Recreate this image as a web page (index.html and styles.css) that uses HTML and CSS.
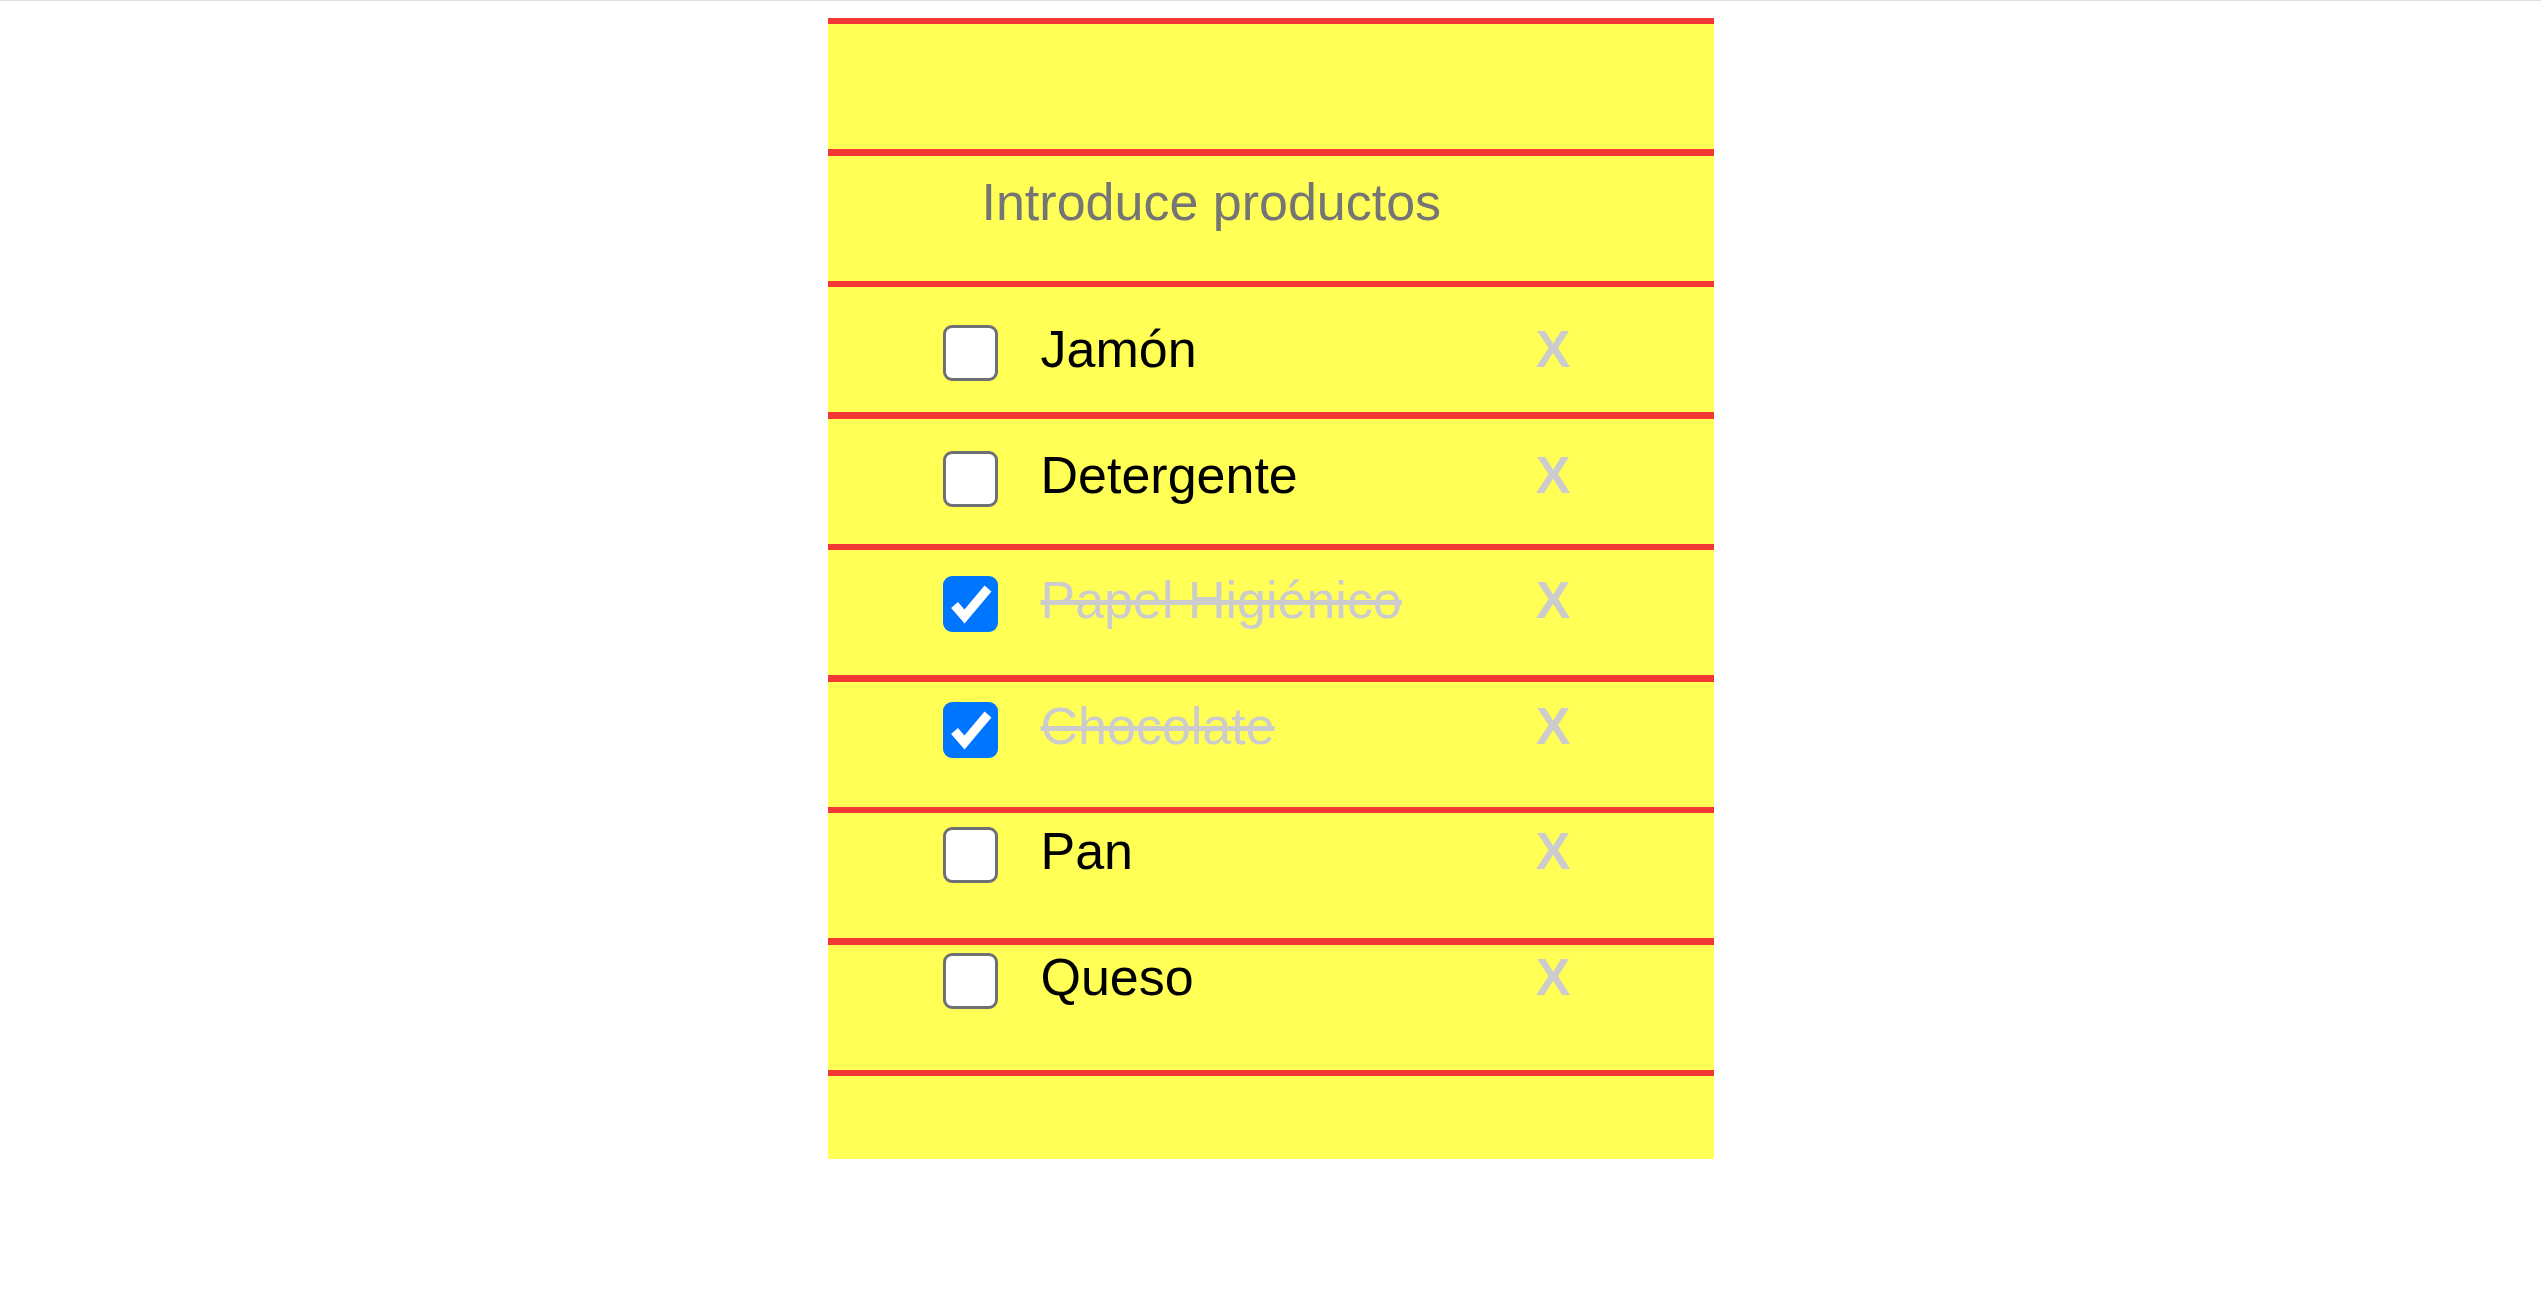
FILE: index.html
```html
<!DOCTYPE html>
<html lang="es">
<head>
    <meta charset="UTF-8">
    <meta name="viewport" content="width=device-width, initial-scale=1.0">
    <title>Lista de la compra</title>
    <link rel="stylesheet" href="styles.css">
</head>
<body>

    <main class="hoja">
        <form class="nuevo">
            <input type="text" class="entrada" placeholder="Introduce productos">
        </form>

        <ul class="productos">
            <li class="producto">
                <input type="checkbox" class="marca">
                <span class="nombre">Jamón</span>
                <button class="borrar">X</button>
            </li>
            <li class="producto">
                <input type="checkbox" class="marca">
                <span class="nombre">Detergente</span>
                <button class="borrar">X</button>
            </li>
            <li class="producto hecho">
                <input type="checkbox" class="marca" checked>
                <span class="nombre">Papel Higiénico</span>
                <button class="borrar">X</button>
            </li>
            <li class="producto hecho">
                <input type="checkbox" class="marca" checked>
                <span class="nombre">Chocolate</span>
                <button class="borrar">X</button>
            </li>
            <li class="producto">
                <input type="checkbox" class="marca">
                <span class="nombre">Pan</span>
                <button class="borrar">X</button>
            </li>
            <li class="producto">
                <input type="checkbox" class="marca">
                <span class="nombre">Queso</span>
                <button class="borrar">X</button>
            </li>
        </ul>
    </main>

</body>
</html>
```

FILE: styles.css
```css
body {
    margin: 0;
    border-top: 1px solid #dfdfe6;
    background-color: #fff;
    font-family: "Liberation Sans", Arial, sans-serif;
}
.hoja {
    width: 886px;
    margin: 17px auto 0;
    padding: 155px 0 86.4px;
    /* hoja de bloc: amarillo con rayas rojas */
    background-color: #ffff55;
    background-image: repeating-linear-gradient(to bottom, #f23737 0, #f23737 6px, transparent 6px, transparent 131.5px);
}
.nuevo {
    margin: 0;
}
.entrada {
    display: block;
    width: 620px;
    height: 58px;
    margin-left: 154px;
    padding: 0;
    border: 0;
    outline: none;
    background: transparent;
    font-family: inherit;
    font-size: 52px;
    color: #000;
}
.entrada::placeholder {
    color: #757575;
}
.productos {
    list-style: none;
    margin: 88px 0 0;
    padding: 0;
}
.producto {
    display: flex;
    align-items: flex-start;
    height: 125.6px;
    padding: 0 143px 0 115px;
}
.marca {
    appearance: none;
    -webkit-appearance: none;
    box-sizing: border-box;
    flex: none;
    width: 55px;
    height: 56px;
    margin: 6px 0 0 0;
    border: 3px solid #6f6f76;
    border-radius: 9px;
    background-color: #fff;
    cursor: pointer;
}
.marca:checked {
    border-color: #0075ff;
    background-color: #0075ff;
    background-image: url("data:image/svg+xml,%3Csvg xmlns='http://www.w3.org/2000/svg' viewBox='0 0 55 56'%3E%3Cpath d='M11.5 29 L21.5 40.5 L45 12.5' fill='none' stroke='%23fff' stroke-width='9'/%3E%3C/svg%3E");
    background-size: 55px 56px;
    background-position: -3px -3px;
}
.nombre {
    flex: 1;
    margin-left: 43px;
    font-size: 52px;
    color: #000;
}
.hecho .nombre {
    color: #ccc;
    text-decoration: line-through;
}
.borrar {
    padding: 0;
    border: 0;
    background: none;
    font-family: inherit;
    font-size: 52px;
    font-weight: bold;
    line-height: normal;
    color: #ccc;
    cursor: pointer;
}
```
